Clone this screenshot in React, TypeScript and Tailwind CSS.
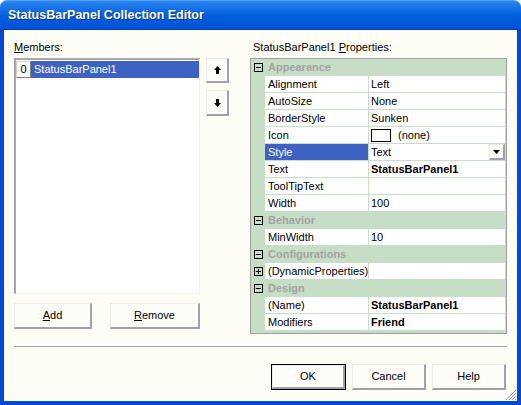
import React from "react";

type Row =
  | { cat: string }
  | { name: string; value: string; bold?: boolean; selected?: boolean; icon?: boolean; plus?: boolean; dropdown?: boolean };

const rows: Row[] = [
  { cat: "Appearance" },
  { name: "Alignment", value: "Left" },
  { name: "AutoSize", value: "None" },
  { name: "BorderStyle", value: "Sunken" },
  { name: "Icon", value: "(none)", icon: true },
  { name: "Style", value: "Text", selected: true, dropdown: true },
  { name: "Text", value: "StatusBarPanel1", bold: true },
  { name: "ToolTipText", value: "" },
  { name: "Width", value: "100" },
  { cat: "Behavior" },
  { name: "MinWidth", value: "10" },
  { cat: "Configurations" },
  { name: "(DynamicProperties)", value: "", plus: true },
  { cat: "Design" },
  { name: "(Name)", value: "StatusBarPanel1", bold: true },
  { name: "Modifiers", value: "Friend", bold: true },
];

function Box({ plus }: { plus?: boolean }) {
  return (
    <svg width="9" height="9" viewBox="0 0 9 9" className="block">
      <rect x="0.5" y="0.5" width="8" height="8" fill="none" stroke="#000" />
      <path d="M2 4.5h5" stroke="#000" />
      {plus && <path d="M4.5 2v5" stroke="#000" />}
    </svg>
  );
}

function Btn({ className, children, def }: { className: string; children: React.ReactNode; def?: boolean }) {
  return (
    <div className={`${className} ${def ? "border border-black" : ""} flex`}>
      <div className="flex-1 flex items-center justify-center bg-[#fdfdf8] border-t border-l border-[#ecebe6] border-r-2 border-b-2 border-r-[#a3a1a8] border-b-[#a3a1a8]">
        {children}
      </div>
    </div>
  );
}

function Arrow({ down }: { down?: boolean }) {
  return (
    <svg width="7" height="8" viewBox="0 0 7 8" className={down ? "rotate-180" : ""}>
      <path d="M3.5 0L7 4H5V8H2V4H0Z" fill="#000" />
    </svg>
  );
}

export default function App() {
  return (
    <div className="w-[521px] h-[405px] bg-white font-['Liberation_Sans',Arial,sans-serif] text-[11px] text-black leading-none select-none">
      {/* title bar */}
      <div className="h-[30px] rounded-t-[7px] bg-gradient-to-b from-[#2a86f2] via-[#0060dc] to-[#0052d6] border-t border-[#4fa3ff] border-b border-b-[#003fc0] flex items-center pl-[8px]">
        <span className="text-white font-bold text-[12.5px] [text-shadow:1px_1px_0_#0a2f8a]">StatusBarPanel Collection Editor</span>
      </div>

      {/* client */}
      <div className="relative h-[375px] bg-[#fdfdf6] border-x-4 border-b-4 border-[#0048d8] px-[10px] pt-[10px] flex flex-col">
        <div className="flex h-[294px]">
          {/* members */}
          <div className="w-[186px] flex flex-col">
            <div className="h-[18px] flex items-start pt-[2px]">
              <span><span className="underline">M</span>embers:</span>
            </div>
            <div className="h-[236px] bg-white border-t-2 border-l-2 border-[#a7a5ab] border-r border-b border-r-[#f2f1ec] border-b-[#f2f1ec] pt-[1px]">
              <div className="flex h-[17px]">
                <div className="w-[15px] bg-white border border-[#d0d0d0] border-r-[#808080] border-b-[#808080] flex items-center justify-center">0</div>
                <div className="flex-1 bg-[#3d62c4] text-white flex items-center pl-[3px]">StatusBarPanel1</div>
              </div>
            </div>
            <div className="flex mt-[9px] gap-[18px]">
              <Btn className="w-[78px] h-[26px]">
                <span><span className="underline">A</span>dd</span>
              </Btn>
              <Btn className="w-[90px] h-[26px]">
                <span><span className="underline">R</span>emove</span>
              </Btn>
            </div>
          </div>

          {/* arrows */}
          <div className="w-[23px] ml-[6px] pt-[18px] flex flex-col gap-[7px]">
            <Btn className="w-[23px] h-[25px]">
              <Arrow />
            </Btn>
            <Btn className="w-[23px] h-[26px]">
              <Arrow down />
            </Btn>
          </div>

          {/* properties */}
          <div className="w-[257px] ml-[21px] flex flex-col">
            <div className="h-[18px] pl-[3px] pt-[2px]">
              StatusBarPanel1 <span className="underline">P</span>roperties:
            </div>
            <div className="h-[276px] border border-[#a0a0a0] bg-[#c6ddc6] flex flex-col">
              {rows.map((r, i) =>
                "cat" in r ? (
                  <div key={i} className="h-[17px] flex items-center">
                    <div className="w-[14px] flex justify-center">
                      <Box />
                    </div>
                    <span className="pl-[3px] font-bold text-[#a3a3a3]">{r.cat}</span>
                  </div>
                ) : (
                  <div key={i} className="h-[17px] flex">
                    <div className="w-[14px] flex items-center justify-center">{r.plus && <Box plus />}</div>
                    <div
                      className={`w-[103px] h-[16px] flex items-center pl-[3px] whitespace-nowrap overflow-hidden ${
                        r.selected ? "bg-[#3d62c4] text-white" : "bg-white"
                      }`}
                    >
                      {r.name}
                    </div>
                    <div className="w-[1px]" />
                    <div className="w-[136px] h-[16px] bg-white flex items-center pl-[2px]">
                      {r.icon && <div className="w-[20px] h-[13px] border border-black bg-white mr-[7px]" />}
                      <span className={r.bold ? "font-bold" : ""}>{r.value}</span>
                      {r.dropdown && (
                        <div className="ml-auto w-[16px] h-[16px] flex bg-[#fdfdf8] border-t border-l border-[#ecebe6] border-r-2 border-b-2 border-r-[#a3a1a8] border-b-[#a3a1a8] items-center justify-center">
                          <svg width="7" height="4" viewBox="0 0 7 4">
                            <path d="M0 0H7L3.5 4Z" fill="#000" />
                          </svg>
                        </div>
                      )}
                    </div>
                  </div>
                )
              )}
            </div>
          </div>
        </div>

        <div className="mt-[12px] h-[1px] bg-[#a7a5ab]" />

        <div className="mt-[17px] flex justify-end gap-[6px] pr-[1px]">
          <Btn def className="w-[75px] h-[26px]">
            OK
          </Btn>
          <Btn className="w-[74px] h-[26px]">Cancel</Btn>
          <Btn className="w-[74px] h-[26px]">Help</Btn>
        </div>

        {/* size grip */}
        <svg width="12" height="12" viewBox="0 0 12 12" className="absolute right-0 bottom-0">
          <path d="M11 1L1 11M11 4L4 11M11 7L7 11M11 10L10 11" stroke="#a3a1a8" strokeWidth="1" />
          <path d="M12 2L2 12M12 5L5 12M12 8L8 12" stroke="#ffffff" strokeWidth="1" />
        </svg>
      </div>
    </div>
  );
}
